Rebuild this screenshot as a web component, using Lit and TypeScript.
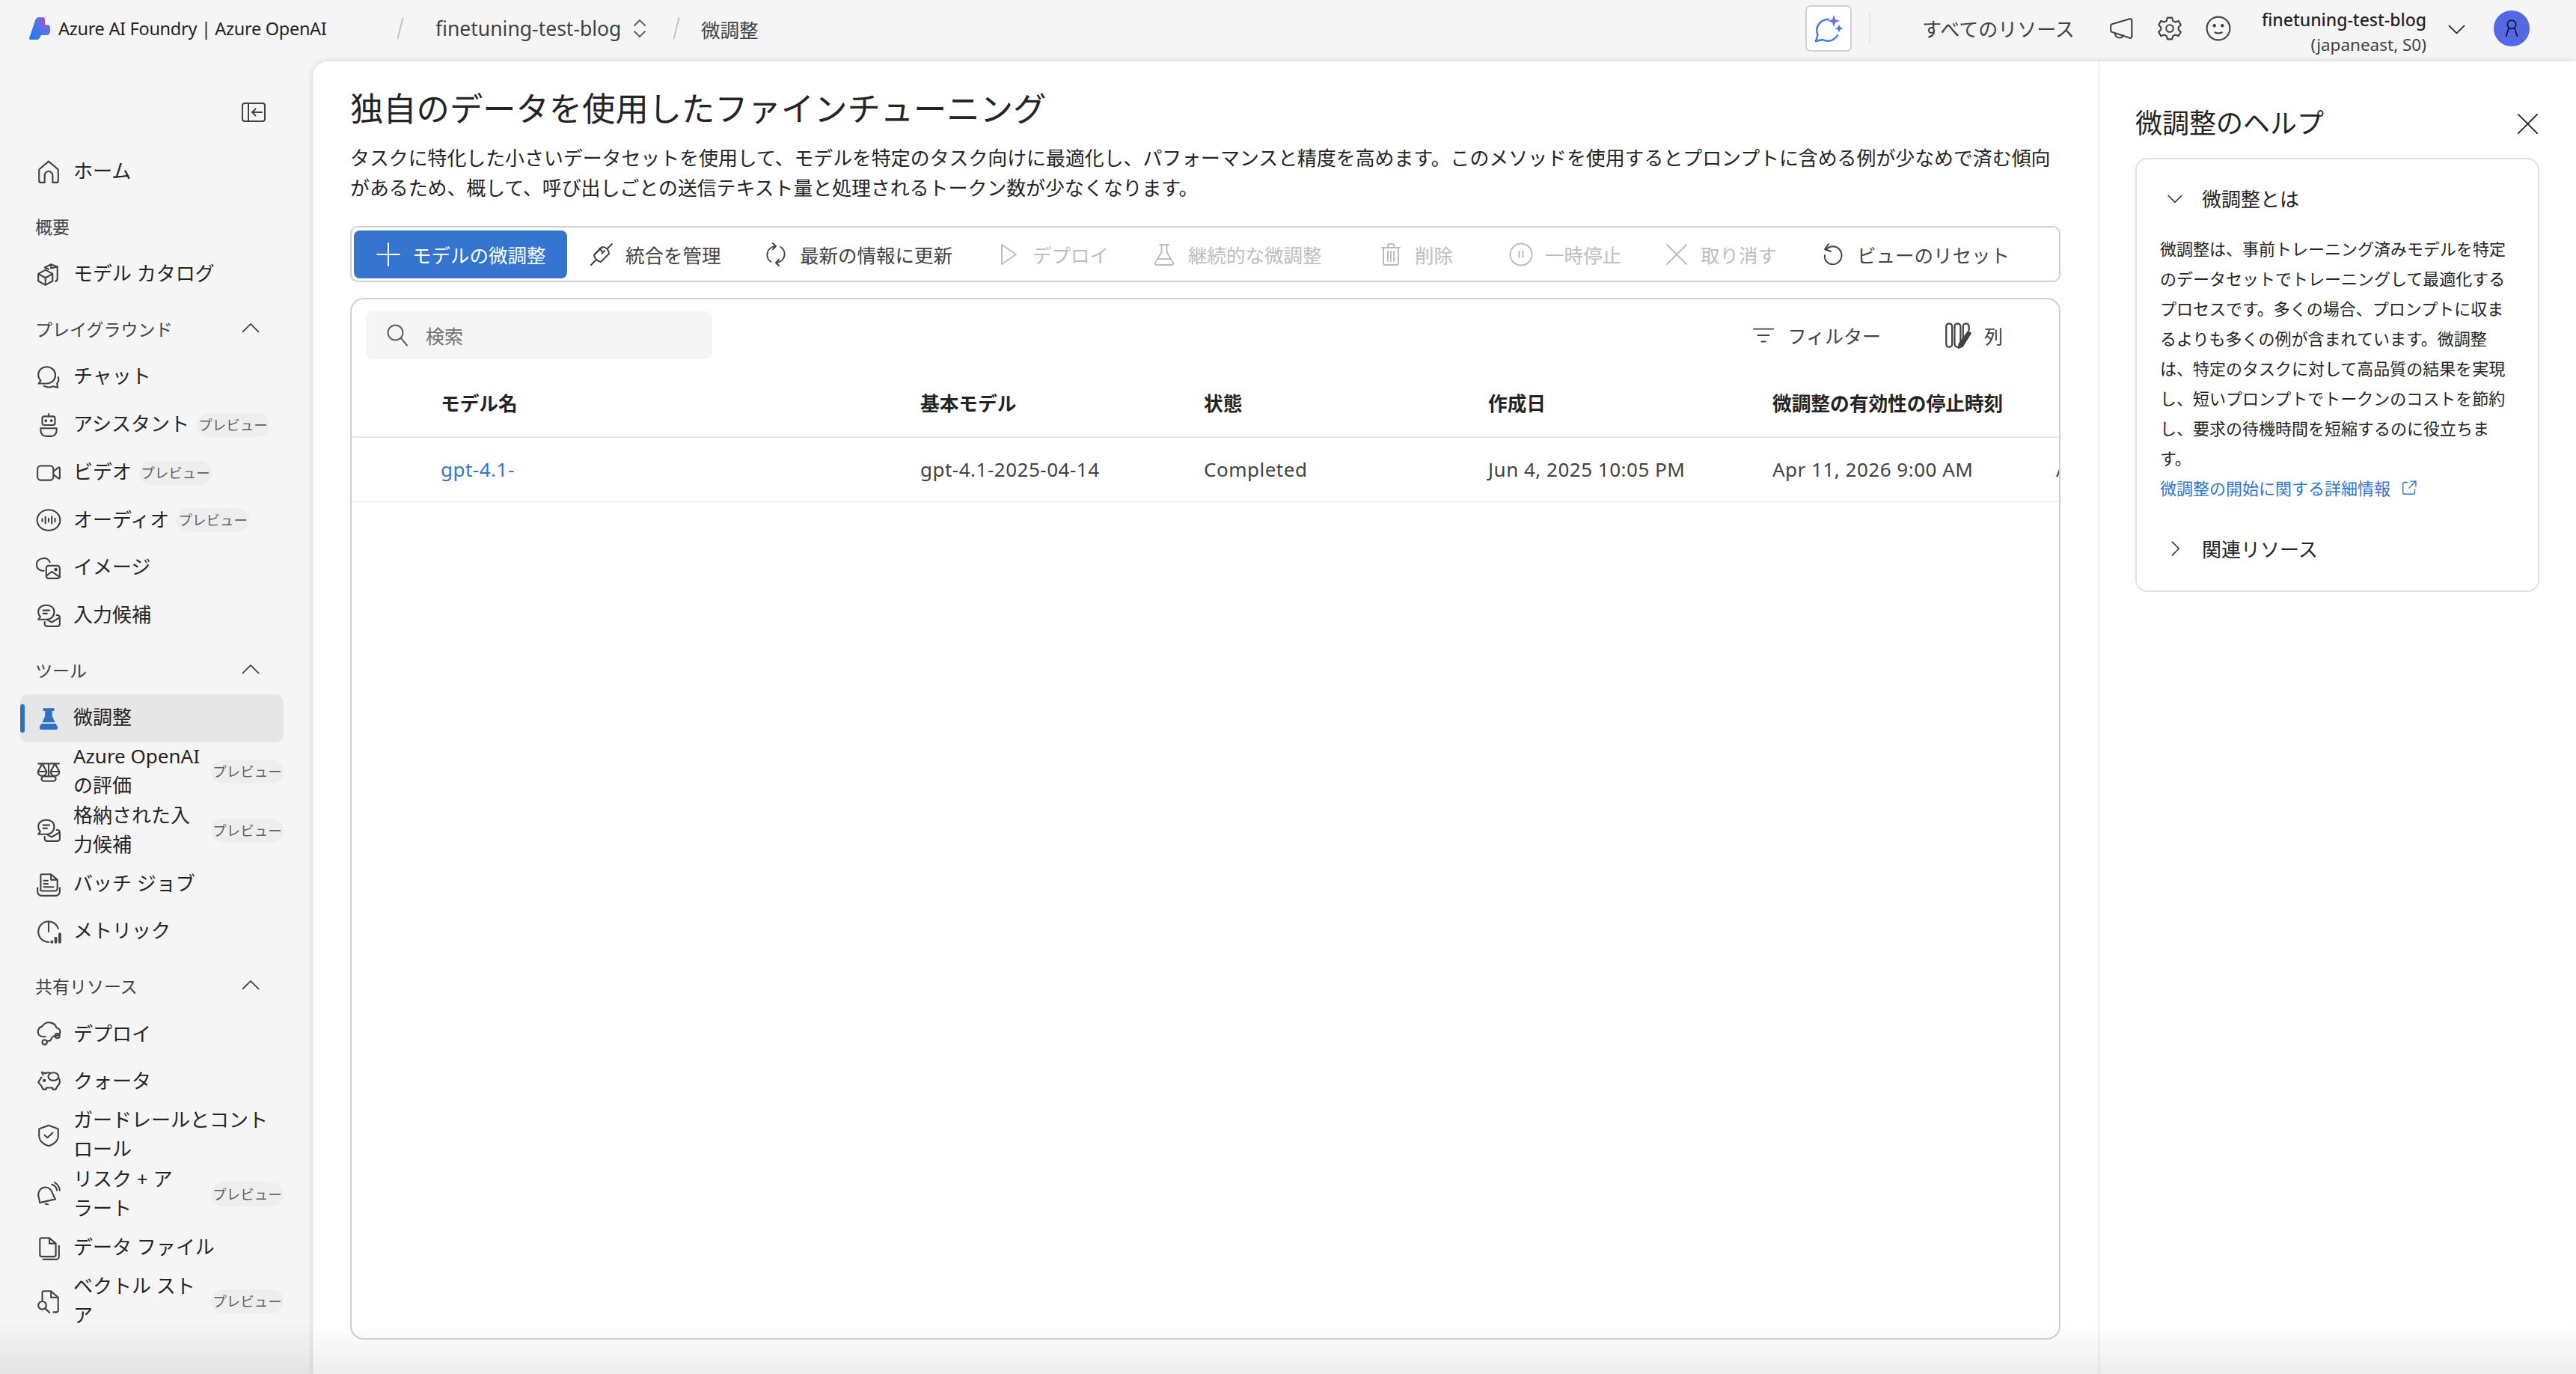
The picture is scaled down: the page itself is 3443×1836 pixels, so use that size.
import { LitElement, css, html, svg } from 'lit';
import { customElement } from 'lit/decorators.js';

const ICONS: Record<string, unknown> = {
  collapse: svg`<rect x="1" y="4" width="30" height="24" rx="3"/><path d="M9 4v24M27 16H14M18.500 11.500 14 16l4.500 4.500"/>`,
  home: svg`<path d="M6 29a2 2 0 0 1-2-2V13.500a2 2 0 0 1 .7-1.500L16 2.500 27.300 12a2 2 0 0 1 .7 1.500V27a2 2 0 0 1-2 2h-5V20a5 5 0 0 0-10 0v9z"/>`,
  catalog: svg`<path d="m3 15 9-5 9 5v9l-9 5-9-5zM3 15l9 5 9-5M12 20v9"/><path d="m11 7 8-4 8 3v15.500a3 3 0 0 1-2.500 2.800M11 7l5 2M19 3v5l8-2"/>`,
  chat: svg`<path d="M13.500 3C7.500 3 3 7.500 3 13c0 3 1.200 5.500 3 7.300L3.500 24h10C20 24 24.500 19 24.500 13.500S20 3 13.500 3z"/><path d="M10 27c3.500 2 8 2 11.500.5l6 1.500-1-5c2-2.500 2.500-5.500 1.500-8"/>`,
  bot: svg`<path d="M16 2v3"/><rect x="8" y="5" width="16" height="11" rx="2.500"/><circle cx="12.500" cy="10.500" r=".8"/><circle cx="19.500" cy="10.500" r=".8"/><path d="M6 20h20v3a7 7 0 0 1-7 7h-6a7 7 0 0 1-7-7z"/>`,
  video: svg`<rect x="2" y="7" width="20" height="18" rx="4"/><path d="m22 14 6.500-5a1 1 0 0 1 1.500 1v12a1 1 0 0 1-1.500 1L22 18"/>`,
  audio: svg`<ellipse cx="16" cy="16" rx="14.500" ry="13"/><path d="M8 14.500v3M12 12v8M16 14v4M20 11.500v9M24 14v4"/>`,
  image: svg`<path d="M10 19.500H8.500a6 6 0 0 1 0-15.500c3.500-1 7.500.5 9 4.500"/><rect x="13" y="13" width="17" height="16" rx="3"/><path d="m13 26 7-5.500 10 7"/><circle cx="25" cy="18" r="1.200" fill="currentColor"/>`,
  suggest: svg`<path d="M13 2.500c-6 0-10 3.500-10 8.500 0 2.500 1 4.500 2.500 6L3 20.500h10c6 0 10-4 10-9.500S19 2.500 13 2.500z"/><path d="M9 9h8M9 13h5M26 15h1a3 3 0 0 1 3 3v8a3 3 0 0 1-3 3H14a3 3 0 0 1-3-3v-2.500M15 21.500l5 2.500 10-6"/>`,
  flaskfill: svg`<path fill="currentColor" stroke="none" d="M9 3h14v3.500h-2.500V13l3.500 8H8l3.500-8V6.500H9zM7 22.500h18l2.300 4A2.500 2.500 0 0 1 25 30H7a2.500 2.500 0 0 1-2.300-3.500z"/>`,
  scale: svg`<path d="M3 6h26M16 6v16M10 28h12a3 3 0 0 0 0-6H10a3 3 0 0 0 0 6zM8 6 2.500 16a5.500 5.500 0 0 0 11 0zM24 6l-5.500 10a5.500 5.500 0 0 0 11 0zM2.500 16h11M18.500 16h11"/>`,
  batch: svg`<path d="M7 3h12l8 7v11a3 3 0 0 1-3 3H8a3 3 0 0 1-2-1V5a2 2 0 0 1 1-2zM19 3v7h8M10 11h5M10 15h5M10 19h12"/><path d="M2 20v5a5 5 0 0 0 5 5h18a5 5 0 0 0 5-5v-5"/>`,
  metric: svg`<path d="M16 16V3M16 3A13 13 0 0 1 28 12M3 16a13 13 0 0 0 13 13h-1M16 3A13 13 0 0 0 3 16"/><path stroke-width="3.500" d="M20 28.500v.5M25 24v5M30 19v10"/>`,
  cloud: svg`<path d="M25 18a5 5 0 0 0 1-10 10 10 0 0 0-18-2A7 7 0 0 0 4 17c1 1 2.500 2 4 2h4"/><circle cx="11" cy="26" r="3"/><circle cx="27" cy="18" r="2.800"/><path d="m14 25 4-1 3-5 3-1"/>`,
  piggy: svg`<path d="M9 7 7.500 3.500 12 5c2-1 4-1.500 6-.5M7 10l-4 6 4 5 2 4h4v-2h8v2h4l2-4c2-1.500 3-4 3-6s-.5-2.500-1-3.500"/><ellipse cx="22" cy="9" rx="6.500" ry="5"/><circle cx="10.500" cy="14" r="1" fill="currentColor"/>`,
  shield: svg`<path d="M16 3.500 28 8v9c0 6-5 10-12 12.500C9 27 4 23 4 17V8z"/><path d="m11 16 3.500 3 6.500-6"/>`,
  bell: svg`<path d="M5 26.500 3 17c0-6 4-10 9-10s8 4 9.500 9l3 6zM12 28l3 .5M20 3.500A9 9 0 0 1 26.500 11M23.500 1a13 13 0 0 1 6.500 10"/>`,
  files: svg`<path d="M7 3h10l8 7v14a2.500 2.500 0 0 1-2.500 2.500h-15A2.500 2.500 0 0 1 5 24V5a2 2 0 0 1 2-2zM17 3v7h8M29 13v13a4 4 0 0 1-4 4H9"/>`,
  findoc: svg`<path d="M8 14V5a2 2 0 0 1 2-2h9l9 8v16a2.500 2.500 0 0 1-2.500 2.500H22M19 3v8h9"/><circle cx="8" cy="21" r="5"/><path d="m12 25 5 5"/>`,
  up: svg`<path d="M4 21 16 9l12 12"/>`,
  down: svg`<path d="M4 11l12 12 12-12"/>`,
  right: svg`<path d="m11 4 12 12-12 12"/>`,
  updown: svg`<path d="m9 12 7-7 7 7M9 20l7 7 7-7"/>`,
  plus: svg`<path d="M16 1v30M1 16h30"/>`,
  plug: svg`<path d="m2 30 6.500-6.500M30 2l-6.500 6.500M6.500 16 16 6.500M6 17a12 12 0 0 0 9 9l11-11a9 9 0 0 0-9-9zM13 8l3.500 3.500M20 11l-3.500 3.500"/>`,
  refresh: svg`<path d="M15 5A11.500 11.500 0 0 0 9.500 26M12 1l4 4-4 4M17 27a11.500 11.500 0 0 0 5.500-21M20 31l-4-4 4-4"/>`,
  play: svg`<path d="M7 3 26 16 7 29z"/>`,
  flask: svg`<path d="M10 3h12M12.500 3v10L4 27a2 2 0 0 0 2 3h20a2 2 0 0 0 2-3l-8.500-14V3M8 22h16"/>`,
  trash: svg`<path d="M4 7h24M12 7V4a2 2 0 0 1 2-2h4a2 2 0 0 1 2 2v3M6 7v21a2 2 0 0 0 2 2h16a2 2 0 0 0 2-2V7M12 12v13M16 12v13M20 12v13"/>`,
  pause: svg`<circle cx="16" cy="16" r="14.500"/><path d="M13.500 12v8M18.500 12v8"/>`,
  cross: svg`<path d="m3 3 26 26M29 3 3 29"/>`,
  undo: svg`<path d="M10 2 5 9l8 3M6 10a12 12 0 1 1 5.500 18.500C6 26.500 4 21 5 17"/>`,
  search: svg`<circle cx="13.500" cy="12.500" r="10"/><path d="m21 20 8 9.500"/>`,
  filter: svg`<path d="M2 7h28M8 16h16M13 25h6"/>`,
  columns: svg`<rect x="2" y="2" width="7" height="28" rx="3.500"/><rect x="12" y="2" width="7" height="28" rx="3.500"/><path d="M22 20V5.500A3.500 3.500 0 0 1 25.500 2 3.500 3.500 0 0 1 29 5.500V10"/><path fill="currentColor" stroke-width="1" d="m28 11 3.500 2.500-10 16-5 2 .5-5.500z"/>`,
  ext: svg`<path d="M13 5H7a3 3 0 0 0-3 3v17a3 3 0 0 0 3 3h17a3 3 0 0 0 3-3v-6M19 3h10v10M29 3 16 16"/>`,
  mega: svg`<path d="M3 12.500a2 2 0 0 1 1.500-2L27 4a2 2 0 0 1 2.500 2v20a2 2 0 0 1-2.500 2L4.500 20.500a2 2 0 0 1-1.500-2zM8.500 22a5.500 5.500 0 0 0 10.500 2.500"/>`,
  gear: svg`<path d="M13 2.500h6l1 4 3 1.500 4-1.500 3 5-3 3v3l3 3-3 5-4-1.500-3 1.500-1 4h-6l-1-4-3-1.500-4 1.500-3-5 3-3v-3l-3-3 3-5 4 1.500 3-1.500z"/><circle cx="16" cy="16" r="4.500"/>`,
  smile: svg`<circle cx="16" cy="16" r="14.500"/><path d="M11.500 21c3 1.500 6 1.500 9 0"/><circle cx="11" cy="12.500" r="1.100" fill="currentColor"/><circle cx="21" cy="12.500" r="1.100" fill="currentColor"/>`,
  person: svg`<circle cx="16" cy="10" r="6.500"/><path d="M11.500 15.500 7.500 28M20.500 15.500l4 12.500"/>`,
};

function icon(name: string, size = 32) {
  return html`<svg class="ic" width=${size} height=${size} viewBox="0 0 32 32" fill="none" stroke="currentColor" stroke-width="2" stroke-linecap="round" stroke-linejoin="round">${ICONS[name]}</svg>`;
}

interface NavRow {
  label: string;
  ic?: string;
  preview?: boolean;
  wrap?: boolean;
  active?: boolean;
  head?: boolean;
  chevron?: boolean;
}

const NAV: NavRow[] = [
  { label: 'ホーム', ic: 'home' },
  { label: '概要', head: true },
  { label: 'モデル カタログ', ic: 'catalog' },
  { label: 'プレイグラウンド', head: true, chevron: true },
  { label: 'チャット', ic: 'chat' },
  { label: 'アシスタント', ic: 'bot', preview: true },
  { label: 'ビデオ', ic: 'video', preview: true },
  { label: 'オーディオ', ic: 'audio', preview: true },
  { label: 'イメージ', ic: 'image' },
  { label: '入力候補', ic: 'suggest' },
  { label: 'ツール', head: true, chevron: true },
  { label: '微調整', ic: 'flaskfill', active: true },
  { label: 'Azure OpenAI\nの評価', ic: 'scale', preview: true, wrap: true },
  { label: '格納された入\n力候補', ic: 'suggest', preview: true, wrap: true },
  { label: 'バッチ ジョブ', ic: 'batch' },
  { label: 'メトリック', ic: 'metric' },
  { label: '共有リソース', head: true, chevron: true },
  { label: 'デプロイ', ic: 'cloud' },
  { label: 'クォータ', ic: 'piggy' },
  { label: 'ガードレールとコント\nロール', ic: 'shield' },
  { label: 'リスク + ア\nラート', ic: 'bell', preview: true, wrap: true },
  { label: 'データ ファイル', ic: 'files' },
  { label: 'ベクトル スト\nア', ic: 'findoc', preview: true, wrap: true },
];

const TOOLS = [
  { label: '統合を管理', ic: 'plug' },
  { label: '最新の情報に更新', ic: 'refresh' },
  { label: 'デプロイ', ic: 'play', off: true },
  { label: '継続的な微調整', ic: 'flask', off: true },
  { label: '削除', ic: 'trash', off: true },
  { label: '一時停止', ic: 'pause', off: true },
  { label: '取り消す', ic: 'cross', off: true },
  { label: 'ビューのリセット', ic: 'undo' },
];

const HEADERS = ['モデル名', '基本モデル', '状態', '作成日', '微調整の有効性の停止時刻'];
const CELLS = ['gpt-4.1-2025-04-14', 'Completed', 'Jun 4, 2025 10:05 PM', 'Apr 11, 2026 9:00 AM', 'Apr'];

@customElement('app-root')
export class AppRoot extends LitElement {
  static styles = css`
    :host {
      display: block;
      position: relative;
      height: 100vh;
      overflow: hidden;
      background: #f5f5f5;
      color: #242424;
      font-family: 'Noto Sans', 'Noto Sans CJK JP', sans-serif;
      font-size: 26px;
    }

    .ic {
      display: block;
      flex: none;
    }

    .top {
      display: flex;
      align-items: center;
      height: 82px;
      padding: 0 0 6px 39px;
      box-sizing: border-box;
      white-space: nowrap;
    }

    .brand {
      width: 358px;
      margin-left: 11px;
      font-size: 23.5px;
      letter-spacing: -0.3px;
    }

    .slash {
      flex: none;
      width: 2px;
      height: 30px;
      background: #c4c4c4;
      transform: rotate(14deg);
    }

    .slash.first {
      margin: 0 46px 0 98px;
    }

    .slash.second {
      margin: 0 32px 0 32px;
    }

    .crumb {
      width: 250px;
      color: #424242;
      font-size: 26.5px;
    }

    .crumb-ic {
      margin-left: 7px;
      color: #616161;
    }

    .page {
      width: 80px;
      color: #424242;
      font-size: 25.5px;
    }

    .top-right {
      display: flex;
      align-items: center;
      margin-left: auto;
      padding-right: 62px;
    }

    .copilot {
      display: flex;
      align-items: center;
      justify-content: center;
      width: 62px;
      height: 62px;
      box-sizing: border-box;
      background: #fff;
      border: 2px solid #d1d1d1;
      border-radius: 7px;
    }

    .vr {
      width: 2px;
      height: 40px;
      margin: 0 69px 0 23px;
      background: #e6e6e6;
    }

    .all {
      width: 205px;
      margin-right: 44px;
      color: #424242;
      font-size: 26px;
    }

    .tool-ic {
      color: #424242;
      margin-right: 31px;
    }

    .tool-ic.last {
      margin-right: 0;
    }

    .acct {
      width: 261px;
      margin-top: 10px;
      text-align: right;
      font-size: 23px;
      line-height: 34px;
    }

    .acct b {
      display: block;
      font-weight: 500;
    }

    .acct span {
      display: block;
      color: #424242;
      font-size: 22.5px;
    }

    .acct-ic {
      margin: 0 36px 0 27px;
    }

    .avatar {
      display: flex;
      align-items: center;
      justify-content: center;
      width: 48px;
      height: 48px;
      border-radius: 50%;
      background: #5468e4;
      color: #10153a;
    }

    .body {
      display: flex;
      height: calc(100% - 82px);
    }

    .side {
      flex: none;
      width: 418px;
      box-sizing: border-box;
      padding: 0 39px 0 27px;
    }

    .side-top {
      display: flex;
      justify-content: flex-end;
      height: 116px;
      padding: 52px 24px 0 0;
      box-sizing: border-box;
      color: #424242;
    }

    .row {
      display: flex;
      align-items: center;
      gap: 16px;
      position: relative;
      min-height: 63.7px;
      padding-left: 21px;
      box-sizing: border-box;
      line-height: 39.5px;
    }

    .row .ic {
      color: #424242;
    }

    .row.active {
      background: #e6e6e6;
      border-radius: 10px;
    }

    .row.active .ic {
      color: #2f6fc4;
    }

    .row.active::before {
      content: '';
      position: absolute;
      left: 0;
      top: 13px;
      bottom: 13px;
      width: 6px;
      border-radius: 3px;
      background: #2f6fc4;
    }

    .row-text {
      display: flex;
      align-items: center;
      gap: 10px;
      flex: 1;
      min-width: 0;
    }

    .label {
      margin: -1px 0 1px;
      white-space: pre-line;
    }

    .label.wrap {
      width: 174px;
    }

    .badge {
      flex: none;
      width: 97px;
      height: 32px;
      border-radius: 16px;
      background: #eeeeee;
      color: #616161;
      font-size: 18.5px;
      line-height: 32px;
      text-align: center;
      white-space: nowrap;
    }

    .head {
      display: flex;
      align-items: center;
      justify-content: space-between;
      height: 48px;
      margin: 16px 0 9.5px;
      padding: 0 30px 0 20px;
      color: #424242;
      font-size: 23px;
    }

    .main {
      flex: 1;
      display: flex;
      min-width: 0;
      background: #fff;
      border-top-left-radius: 20px;
      box-shadow: 0 0 7px rgba(0, 0, 0, 0.16);
    }

    .content {
      flex: 1;
      display: flex;
      flex-direction: column;
      min-width: 0;
      padding: 33px 50px 46px;
    }

    h1 {
      margin: 0;
      font-size: 44.3px;
      line-height: 60px;
      font-weight: 400;
      white-space: nowrap;
    }

    .desc {
      margin: 17px 0 31px;
      font-size: 25.9px;
      line-height: 39.5px;
    }

    .bar {
      display: grid;
      grid-template-columns: 315px 233px 311px 208px 303px 174px 208px 209px auto;
      align-items: center;
      height: 75px;
      padding-left: 3px;
      box-sizing: border-box;
      border: 2px solid #d1d1d1;
      border-radius: 10px;
      white-space: nowrap;
      font-size: 25.5px;
    }

    .primary {
      display: flex;
      align-items: center;
      gap: 16px;
      width: 285px;
      height: 64px;
      padding-left: 30px;
      box-sizing: border-box;
      border-radius: 8px;
      background: #3575cf;
      color: #fff;
    }

    .tool {
      display: flex;
      align-items: center;
      gap: 16px;
      color: #424242;
    }

    .tool.off {
      color: #bdbdbd;
    }

    .card {
      flex: 1;
      margin-top: 21px;
      border: 2px solid #d1d1d1;
      border-radius: 18px;
      overflow: hidden;
      white-space: nowrap;
    }

    .card-top {
      display: flex;
      align-items: center;
      height: 64px;
      margin-top: 16px;
      padding: 0 75px 0 19px;
    }

    .searchbox {
      display: flex;
      align-items: center;
      gap: 22px;
      width: 463px;
      height: 64px;
      padding-left: 26px;
      box-sizing: border-box;
      background: #f5f5f5;
      border-radius: 8px;
      color: #707070;
      font-size: 25px;
    }

    .searchbox .ic {
      color: #616161;
    }

    .card-btn {
      display: flex;
      align-items: center;
      gap: 17px;
      color: #424242;
      font-size: 25px;
    }

    .card-btn.first {
      margin-left: auto;
      margin-right: 85px;
    }

    .grid {
      display: grid;
      grid-template-columns: 119px 641px 379px 380px 380px 379px 100px;
      align-items: center;
    }

    .hdr {
      height: 87px;
      margin-top: 14px;
      padding-bottom: 2px;
      border-bottom: 2px solid #e6e6e6;
      font-weight: 600;
      font-size: 25.7px;
    }

    .val {
      height: 84px;
      border-bottom: 2px solid #f0f0f0;
      color: #424242;
      letter-spacing: 0.5px;
    }

    .val a {
      color: #3575cf;
    }

    .help {
      flex: none;
      width: 639px;
      box-sizing: border-box;
      padding: 59px 49px 0 48px;
      border-left: 2px solid #f0f0f0;
    }

    .help-head {
      display: flex;
      align-items: center;
      justify-content: space-between;
      font-size: 36px;
      line-height: 48px;
      margin-bottom: 22px;
    }

    .help-card {
      padding: 24px 31px 28px;
      border: 2px solid #e0e0e0;
      border-radius: 16px;
    }

    .acc {
      display: flex;
      align-items: center;
      gap: 24px;
      height: 56px;
      padding-left: 8px;
      color: #242424;
    }

    .acc-body {
      margin-top: 19px;
      font-size: 22px;
      line-height: 40px;
      color: #242424;
    }

    .link {
      display: flex;
      align-items: center;
      gap: 14px;
      font-size: 22px;
      line-height: 40px;
      color: #2f76d0;
      margin-bottom: 33px;
    }

    .fade {
      position: absolute;
      left: 0;
      right: 0;
      bottom: 0;
      height: 70px;
      background: linear-gradient(to bottom, rgba(0, 0, 0, 0), rgba(0, 0, 0, 0.07));
      pointer-events: none;
    }
  `;

  private renderNav(row: NavRow) {
    if (row.head) {
      return html`<div class="head"><span>${row.label}</span>${row.chevron ? icon('up', 28) : null}</div>`;
    }
    return html`<div class="row ${row.active ? 'active' : ''}">
      ${icon(row.ic!, 34)}
      <div class="row-text">
        <span class="label ${row.wrap ? 'wrap' : ''}">${row.label}</span>
        ${row.preview ? html`<span class="badge">プレビュー</span>` : null}
      </div>
    </div>`;
  }

  render() {
    return html`
      <header class="top">
        <svg width="28" height="30" viewBox="0 0 28 30">
          <defs>
            <linearGradient id="lg" x1="0" y1="1" x2="1" y2="0">
              <stop offset="0" stop-color="#1f7cf2" />
              <stop offset="1" stop-color="#7d6be0" />
            </linearGradient>
          </defs>
          <path fill="url(#lg)" d="M8.500 3C9.500 1 11 0 13 0h4c2.500 0 4 1.500 4 4v6h3c2.500 0 4 1.500 4 4v5c0 3-2 5-5 5h-7l-2 3.500C13.500 29 12 30 10 30H2c-1.500 0-2.300-1.200-1.800-2.500z" />
          <path fill="#d63ea0" d="M17 0c2.500 0 4 1.500 4 4v6c0 2-1.500 4-3 6 .5-6 .5-11-1-16z" />
        </svg>
        <span class="brand">Azure AI Foundry | Azure OpenAI</span>
        <i class="slash first"></i>
        <span class="crumb">finetuning-test-blog</span>
        <span class="crumb-ic">${icon('updown', 32)}</span>
        <i class="slash second"></i>
        <span class="page">微調整</span>
        <div class="top-right">
          <div class="copilot">
            <svg width="40" height="40" viewBox="0 0 40 40" fill="none">
              <path stroke="#3b78e7" stroke-width="2.400" stroke-linecap="round" stroke-linejoin="round" d="M20 8A15 15 0 0 0 5.500 29L3 37l9-2A15 15 0 0 0 32 29" />
              <path fill="#6b6fe0" d="m27 2 2 6 6 2-6 2-2 6-2-6-6-2 6-2z" />
              <path fill="#3b78e7" d="m34 14.500 1.500 4 4 1.500-4 1.500-1.500 4-1.500-4-4-1.500 4-1.500z" />
            </svg>
          </div>
          <i class="vr"></i>
          <span class="all">すべてのリソース</span>
          <span class="tool-ic">${icon('mega', 34)}</span>
          <span class="tool-ic">${icon('gear', 34)}</span>
          <span class="tool-ic last">${icon('smile', 34)}</span>
          <div class="acct">
            <b>finetuning-test-blog</b>
            <span>(japaneast, S0)</span>
          </div>
          <span class="acct-ic">${icon('down', 27)}</span>
          <div class="avatar">${icon('person', 28)}</div>
        </div>
      </header>
      <div class="body">
        <nav class="side">
          <div class="side-top">${icon('collapse')}</div>
          ${NAV.map((row) => this.renderNav(row))}
        </nav>
        <main class="main">
          <section class="content">
            <h1>独自のデータを使用したファインチューニング</h1>
            <p class="desc">タスクに特化した小さいデータセットを使用して、モデルを特定のタスク向けに最適化し、パフォーマンスと精度を高めます。このメソッドを使用するとプロンプトに含める例が少なめで済む傾向があるため、概して、呼び出しごとの送信テキスト量と処理されるトークン数が少なくなります。</p>
            <div class="bar">
              <div class="primary">${icon('plus')}<span>モデルの微調整</span></div>
              ${TOOLS.map(
                (tool) => html`<div class="tool ${tool.off ? 'off' : ''}">${icon(tool.ic)}<span>${tool.label}</span></div>`,
              )}
            </div>
            <div class="card">
              <div class="card-top">
                <div class="searchbox">${icon('search')}<span>検索</span></div>
                <div class="card-btn first">${icon('filter', 30)}<span>フィルター</span></div>
                <div class="card-btn">${icon('columns', 36)}<span>列</span></div>
              </div>
              <div class="grid hdr">
                <span></span>
                ${HEADERS.map((text) => html`<span>${text}</span>`)}
                <span>⋮</span>
              </div>
              <div class="grid val">
                <span></span>
                <a>gpt-4.1-</a>
                ${CELLS.map((text) => html`<span>${text}</span>`)}
              </div>
            </div>
          </section>
          <aside class="help">
            <div class="help-head"><span>微調整のヘルプ</span>${icon('cross', 31)}</div>
            <div class="help-card">
              <div class="acc">${icon('down', 24)}<span>微調整とは</span></div>
              <div class="acc-body">微調整は、事前トレーニング済みモデルを特定のデータセットでトレーニングして最適化するプロセスです。多くの場合、プロンプトに収まるよりも多くの例が含まれています。微調整は、特定のタスクに対して高品質の結果を実現し、短いプロンプトでトークンのコストを節約し、要求の待機時間を短縮するのに役立ちます。</div>
              <div class="link"><span>微調整の開始に関する詳細情報</span>${icon('ext', 22)}</div>
              <div class="acc">${icon('right', 24)}<span>関連リソース</span></div>
            </div>
          </aside>
        </main>
      </div>
      <div class="fade"></div>
    `;
  }
}

declare global {
  interface HTMLElementTagNameMap {
    'app-root': AppRoot;
  }
}
